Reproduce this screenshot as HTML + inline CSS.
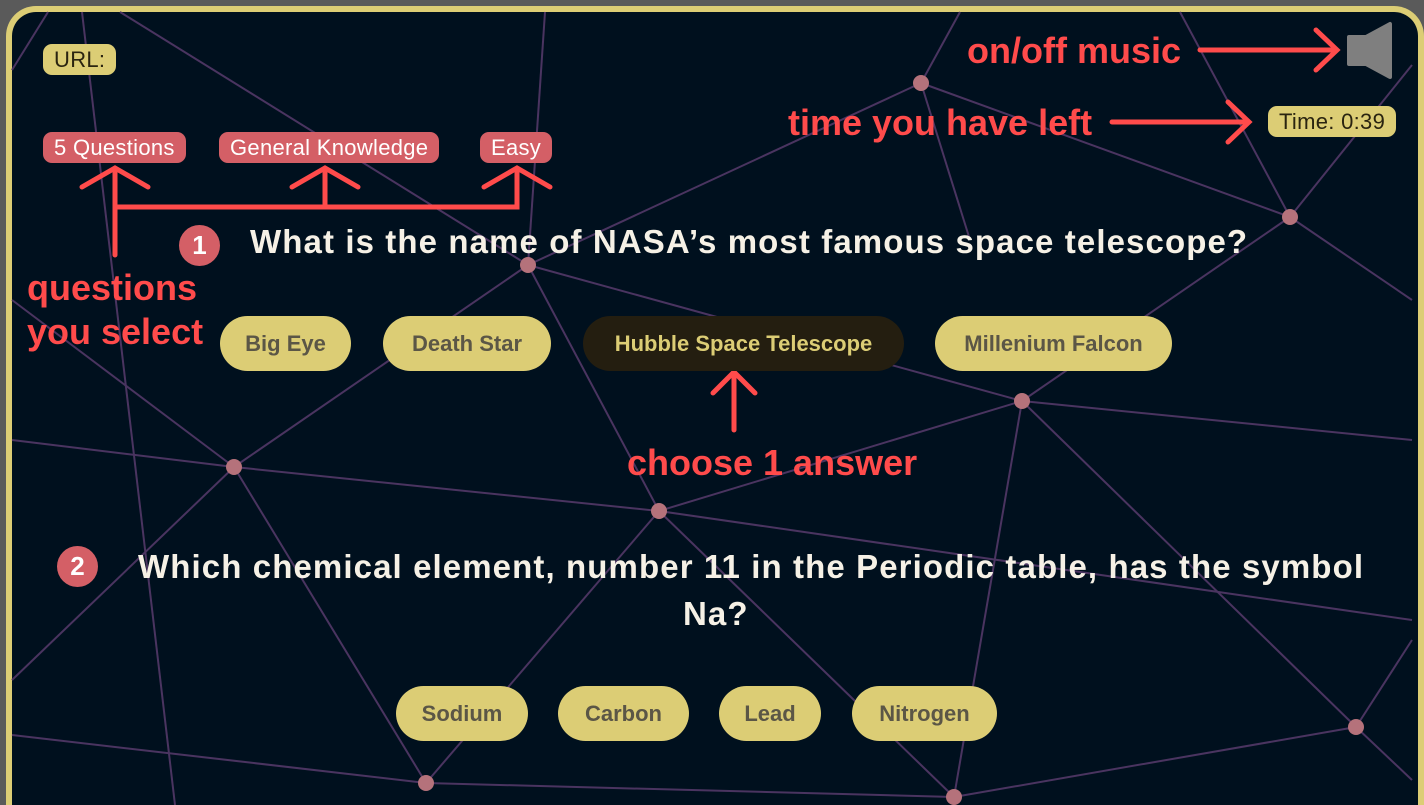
<!DOCTYPE html>
<html><head><meta charset="utf-8"><style>
html,body{margin:0;width:1424px;height:805px;overflow:hidden}
body{background:#5a5a5a;font-family:"Liberation Sans",sans-serif;position:relative}
.frame{position:absolute;left:6px;top:6px;width:1406px;height:793px;border:6px solid #dccd75;border-bottom:0;border-radius:30px 30px 0 0;background:#00101e;overflow:hidden}
.a{position:absolute}
.tag{position:absolute;background:#d45f66;color:#fff;font-size:22px;letter-spacing:0.3px;height:31px;line-height:31px;border-radius:9px;padding:0 11px}
.y{position:absolute;background:#dccd75;color:#2a2410;font-size:22px;letter-spacing:0.3px;height:31px;line-height:31px;border-radius:9px;padding:0 11px}
.ans{position:absolute;background:#dccd75;color:#5b5646;font-size:22px;font-weight:bold;height:55px;line-height:55px;border-radius:28px;text-align:center}
.red{position:absolute;color:#ff4b4b;font-weight:bold;font-size:36px;line-height:44px}
.q{position:absolute;color:#f6f1e6;font-size:33px;font-weight:bold;letter-spacing:1.1px;white-space:nowrap;line-height:47px}
.num{position:absolute;width:41px;height:41px;border-radius:50%;background:#d45f66;color:#fff;font-weight:bold;font-size:26px;text-align:center;line-height:41px}
</style></head><body>
<div class="frame"></div>
<svg class="a" style="left:0;top:0" width="1424" height="805">
<g stroke="#4a3460" stroke-width="2" fill="none">
<line x1="48" y1="12" x2="12" y2="70"/>
<line x1="82" y1="12" x2="175" y2="805"/>
<line x1="120" y1="12" x2="528" y2="265"/>
<line x1="528" y1="265" x2="545" y2="12"/>
<line x1="528" y1="265" x2="921" y2="83"/>
<line x1="921" y1="83" x2="960" y2="12"/>
<line x1="921" y1="83" x2="1290" y2="217"/>
<line x1="921" y1="83" x2="970" y2="240"/>
<line x1="1180" y1="12" x2="1290" y2="217"/>
<line x1="1290" y1="217" x2="1412" y2="65"/>
<line x1="1290" y1="217" x2="1412" y2="300"/>
<line x1="1290" y1="217" x2="1022" y2="401"/>
<line x1="528" y1="265" x2="1022" y2="401"/>
<line x1="528" y1="265" x2="234" y2="467"/>
<line x1="528" y1="265" x2="659" y2="511"/>
<line x1="1022" y1="401" x2="1412" y2="440"/>
<line x1="1022" y1="401" x2="659" y2="511"/>
<line x1="1022" y1="401" x2="1356" y2="727"/>
<line x1="1022" y1="401" x2="954" y2="797"/>
<line x1="234" y1="467" x2="659" y2="511"/>
<line x1="234" y1="467" x2="12" y2="440"/>
<line x1="234" y1="467" x2="12" y2="680"/>
<line x1="234" y1="467" x2="426" y2="783"/>
<line x1="12" y1="300" x2="234" y2="467"/>
<line x1="659" y1="511" x2="426" y2="783"/>
<line x1="659" y1="511" x2="954" y2="797"/>
<line x1="659" y1="511" x2="1412" y2="620"/>
<line x1="12" y1="735" x2="426" y2="783"/>
<line x1="426" y1="783" x2="954" y2="797"/>
<line x1="954" y1="797" x2="1356" y2="727"/>
<line x1="1356" y1="727" x2="1412" y2="780"/>
<line x1="1356" y1="727" x2="1412" y2="640"/>
</g>
<g fill="#b5727b">
<circle cx="921" cy="83" r="8"/><circle cx="1290" cy="217" r="8"/><circle cx="528" cy="265" r="8"/>
<circle cx="1022" cy="401" r="8"/><circle cx="234" cy="467" r="8"/><circle cx="659" cy="511" r="8"/>
<circle cx="1356" cy="727" r="8"/><circle cx="426" cy="783" r="8"/><circle cx="954" cy="797" r="8"/>
</g>
<g stroke="#ff4b4b" stroke-width="5" fill="none" stroke-linecap="round">
<path d="M115 255V172M82 187L115 168 148 187M115 207H517V172M117 207H325V172M292 187L325 168 358 187M484 187L517 168 550 187"/>
<path d="M1200 50H1332M1316 30L1337 50 1316 70"/>
<path d="M1112 122H1245M1228 102L1249 122 1228 142"/>
<path d="M734 430V375M713 393L734 372 755 393"/>
</g>
<path d="M1349 37H1366L1390 24V77L1366 64H1349Z" fill="#7f7f7f" stroke="#7f7f7f" stroke-width="4" stroke-linejoin="round"/>
</svg>
<div class="y" style="left:43px;top:44px">URL:</div>
<div class="y" style="left:1268px;top:106px">Time: 0:39</div>
<div class="tag" style="left:43px;top:132px">5 Questions</div>
<div class="tag" style="left:219px;top:132px">General Knowledge</div>
<div class="tag" style="left:480px;top:132px">Easy</div>
<div class="red" style="left:967px;top:29px">on/off music</div>
<div class="red" style="left:788px;top:101px">time you have left</div>
<div class="red" style="left:27px;top:266px">questions<br>you select</div>
<div class="red" style="left:627px;top:441px">choose 1 answer</div>
<div class="num" style="left:179px;top:225px">1</div>
<div class="q" style="left:250px;top:218px">What is the name of NASA’s most famous space telescope?</div>
<div class="ans" style="left:220px;top:316px;width:131px">Big Eye</div>
<div class="ans" style="left:383px;top:316px;width:168px">Death Star</div>
<div class="ans" style="left:583px;top:316px;width:321px;background:#241e10;color:#dccd75">Hubble Space Telescope</div>
<div class="ans" style="left:935px;top:316px;width:237px">Millenium Falcon</div>
<div class="num" style="left:57px;top:546px">2</div>
<div class="q" style="left:138px;top:543px">Which chemical element, number 11 in the Periodic table, has the symbol</div>
<div class="q" style="left:683px;top:590px">Na?</div>
<div class="ans" style="left:396px;top:686px;width:132px">Sodium</div>
<div class="ans" style="left:558px;top:686px;width:131px">Carbon</div>
<div class="ans" style="left:719px;top:686px;width:102px">Lead</div>
<div class="ans" style="left:852px;top:686px;width:145px">Nitrogen</div>
</body></html>
